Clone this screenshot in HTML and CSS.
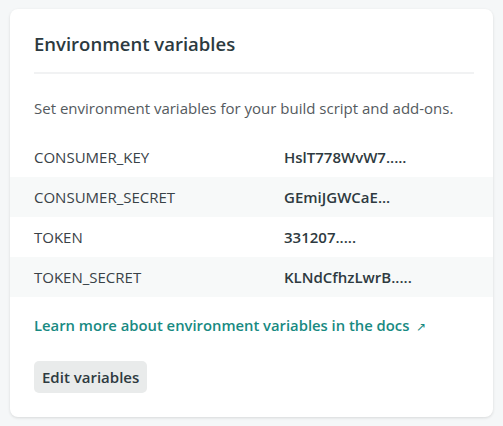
FILE: index.html
```html
<!DOCTYPE html>
<html>
<head>
<meta charset="utf-8">
<link rel="stylesheet" href="styles.css">
</head>
<body>
<section class="card">
  <header class="card-head">
    <h2 class="title">Environment variables</h2>
  </header>
  <p class="desc">Set environment variables for your build script and add-ons.</p>
  <dl class="vars">
    <div class="row"><dt>CONSUMER_KEY</dt><dd>HslT778WvW7.....</dd></div>
    <div class="row alt"><dt>CONSUMER_SECRET</dt><dd>GEmiJGWCaE...</dd></div>
    <div class="row"><dt>TOKEN</dt><dd>331207.....</dd></div>
    <div class="row alt"><dt>TOKEN_SECRET</dt><dd>KLNdCfhzLwrB.....</dd></div>
  </dl>
  <p class="more"><a class="link" href="#">Learn more about environment variables in the docs<span class="arrow">&#8599;</span></a></p>
  <div class="actions"><button class="btn">Edit variables</button></div>
</section>
</body>
</html>
```
FILE: styles.css
```css
html, body { margin: 0; padding: 0; }
body {
  background: #f5f7f8;
  font-family: "Open Sans", "Noto Sans", sans-serif;
  color: #2e3a40;
  padding: 9px 10px;
  width: 503px;
  height: 426px;
  box-sizing: border-box;
}
.card {
  background: #fff;
  border-radius: 8px;
  box-shadow: 0 1px 3px rgba(0,0,0,0.12);
  width: 483px;
  height: 408px;
  box-sizing: border-box;
  padding: 22px 0 0;
}
.card-head {
  margin: 0 19px 0 24px;
  border-bottom: 2px solid #f1f2f3;
  padding-bottom: 15px;
}
.title {
  margin: 0;
  font-size: 18.5px;
  font-weight: 600;
  line-height: 26px;
  color: #2c3a40;
}
.desc {
  margin: 22px 24px 17px;
  font-size: 15px;
  line-height: 24px;
  color: #545a5e;
}
.vars { margin: 0; }
.row {
  display: flex;
  height: 40px;
  align-items: center;
  padding-left: 24px;
  font-size: 15px;
}
.row.alt { background: #f7f9f9; }
.row dt {
  width: 250px;
  color: #394247;
}
.row dd {
  margin: 0;
  font-weight: 600;
  color: #2e3a40;
}
.more {
  margin: 17px 24px 0;
  font-size: 14.8px;
  line-height: 22px;
}
.link {
  font-weight: 600;
  color: #188a82;
  text-decoration: none;
}
.arrow { font-size: 12px; font-weight: 400; color: #188a82; margin-left: 7px; }
.actions { margin: 23px 24px 0; }
.btn {
  font-family: inherit;
  font-size: 15px;
  font-weight: 600;
  color: #2e3a40;
  background: #e9ebeb;
  border: none;
  border-radius: 5px;
  height: 32px;
  padding: 0 8px;
}
```
